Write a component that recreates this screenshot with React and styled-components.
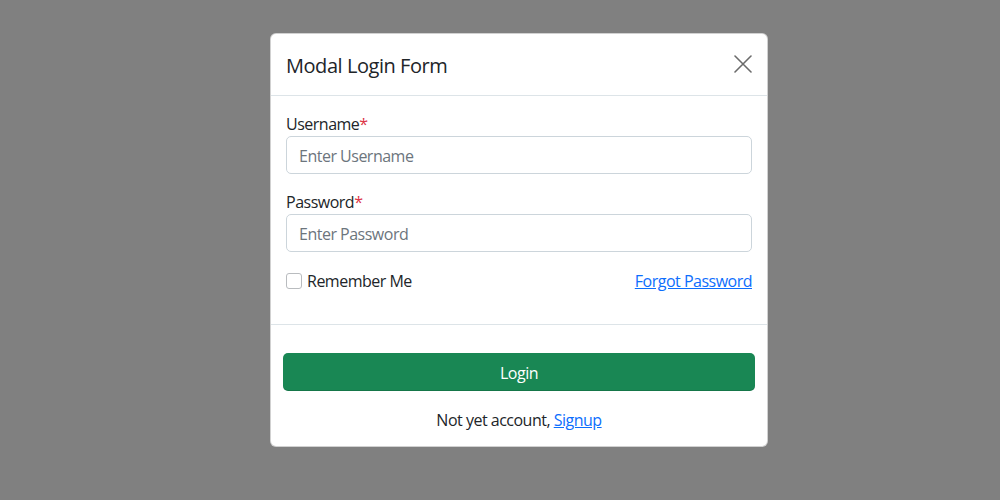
import React from "react";
import styled, { createGlobalStyle } from "styled-components";

const GlobalStyle = createGlobalStyle`
  html, body {
    margin: 0;
    padding: 0;
    height: 100%;
  }
  body {
    font-family: "Open Sans", "Noto Sans", sans-serif;
    font-size: 16px;
    letter-spacing: -0.5px;
    color: #212529;
  }
  #root {
    height: 100%;
  }
`;

const Backdrop = styled.div`
  min-height: 500px;
  background: #808080;
  display: flex;
  justify-content: center;
  align-items: flex-start;
  padding: 33px 0 0 38px;
  box-sizing: border-box;
`;

const Dialog = styled.div`
  width: 498px;
  background: #fff;
  border-radius: 6px;
  border: 1px solid rgba(0, 0, 0, 0.18);
  box-sizing: border-box;
  display: flex;
  flex-direction: column;
`;

const Header = styled.div`
  display: flex;
  align-items: flex-start;
  justify-content: space-between;
  padding: 17px 15px 14px 15px;
  border-bottom: 1px solid #dde4e8;
`;

const Title = styled.h5`
  margin: 0;
  font-size: 20px;
  font-weight: 400;
  line-height: 30px;
  letter-spacing: -0.45px;
  color: #212529;
`;

const CloseButton = styled.button`
  width: 18px;
  height: 18px;
  padding: 0;
  margin-top: 4px;
  border: 0;
  background: transparent;
  display: flex;
  align-items: center;
  justify-content: center;
  cursor: pointer;
`;

const Body = styled.div`
  padding: 16px 15px 0 15px;
  border-bottom: 1px solid #dde4e8;
`;

const Field = styled.div`
  margin-bottom: 16px;
`;

const Label = styled.label`
  display: block;
  line-height: 23px;
  padding-top: 1px;
`;

const Required = styled.span`
  color: #dc3545;
`;

const Input = styled.input`
  display: block;
  width: 100%;
  box-sizing: border-box;
  height: 38px;
  padding: 7px 12px 5px 12px;
  font-family: inherit;
  font-size: 16px;
  letter-spacing: -0.5px;
  color: #212529;
  border: 1px solid #ccd5db;
  border-radius: 5px;
  outline: none;
  &::placeholder {
    color: #6c757d;
  }
`;

const OptionsRow = styled.div`
  display: flex;
  justify-content: space-between;
  align-items: center;
  height: 24px;
  padding-top: 1px;
  margin-bottom: 31px;
`;

const CheckLabel = styled.label`
  display: flex;
  align-items: center;
  gap: 5px;
  line-height: 24px;
`;

const Checkbox = styled.span`
  width: 14px;
  height: 14px;
  margin-top: -1px;
  border: 1px solid #b9bcbf;
  border-radius: 3px;
  background: #fff;
`;

const Link = styled.a`
  color: #0d6efd;
  text-decoration: underline;
  cursor: pointer;
`;

const Footer = styled.div`
  display: flex;
  flex-direction: column;
  align-items: center;
  gap: 17px;
  padding: 28px 12px 14px 12px;
`;

const LoginButton = styled.button`
  width: 100%;
  height: 38px;
  padding-top: 2px;
  border: 0;
  border-radius: 5px;
  background: #198754;
  color: #fff;
  font-family: inherit;
  font-size: 16px;
  letter-spacing: -0.5px;
  cursor: pointer;
  box-shadow: inset 0 -1px 0 rgba(0, 0, 0, 0.12);
`;

const FooterText = styled.p`
  margin: 0;
  line-height: 24px;
`;

export default function App() {
  return (
    <>
      <GlobalStyle />
      <Backdrop>
        <Dialog>
          <Header>
            <Title>Modal Login Form</Title>
            <CloseButton aria-label="Close">
              <svg width="18" height="18" viewBox="0 0 18 18">
                <path
                  d="M1 1 L17 17 M17 1 L1 17"
                  stroke="#6b6b6b"
                  strokeWidth="1.6"
                  strokeLinecap="round"
                />
              </svg>
            </CloseButton>
          </Header>
          <Body>
            <Field>
              <Label>
                Username<Required>*</Required>
              </Label>
              <Input placeholder="Enter Username" />
            </Field>
            <Field>
              <Label>
                Password<Required>*</Required>
              </Label>
              <Input type="password" placeholder="Enter Password" />
            </Field>
            <OptionsRow>
              <CheckLabel>
                <Checkbox />
                Remember Me
              </CheckLabel>
              <Link>Forgot Password</Link>
            </OptionsRow>
          </Body>
          <Footer>
            <LoginButton>Login</LoginButton>
            <FooterText>
              Not yet account, <Link>Signup</Link>
            </FooterText>
          </Footer>
        </Dialog>
      </Backdrop>
    </>
  );
}
